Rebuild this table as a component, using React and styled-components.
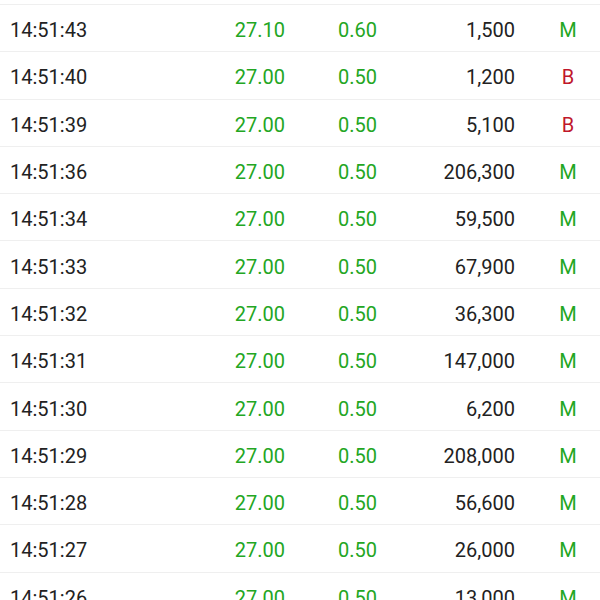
import React from "react";
import styled, { createGlobalStyle } from "styled-components";

const Global = createGlobalStyle`
  html, body { margin: 0; padding: 0; background: #ffffff; }
  body { font-family: Roboto, "Noto Sans", sans-serif; overflow: hidden; }
`;

const Page = styled.div`
  width: 600px;
  height: 600px;
  overflow: hidden;
  padding-top: 4px;
  box-sizing: border-box;
  background: #fff;
`;

const List = styled.div`
  border-top: 1px solid #efefef;
`;

const Row = styled.div`
  display: grid;
  grid-template-columns: 175px 100px 92px 138px 85px;
  align-items: center;
  height: 47.3px;
  box-sizing: border-box;
  padding: 4px 0 0 10px;
  border-bottom: 1px solid #efefef;
  font-size: 20px;
  color: #222222;
`;

const Time = styled.span`
  text-align: left;
`;

const Num = styled.span`
  text-align: right;
  color: ${(p) => (p.$green ? "#23a623" : "#222222")};
`;

const Flag = styled.span`
  padding-left: 21px;
  text-align: center;
  color: ${(p) => (p.$type === "B" ? "#c0172b" : "#23a623")};
`;

const rows = [
  ["14:51:43", "27.10", "0.60", "1,500", "M"],
  ["14:51:40", "27.00", "0.50", "1,200", "B"],
  ["14:51:39", "27.00", "0.50", "5,100", "B"],
  ["14:51:36", "27.00", "0.50", "206,300", "M"],
  ["14:51:34", "27.00", "0.50", "59,500", "M"],
  ["14:51:33", "27.00", "0.50", "67,900", "M"],
  ["14:51:32", "27.00", "0.50", "36,300", "M"],
  ["14:51:31", "27.00", "0.50", "147,000", "M"],
  ["14:51:30", "27.00", "0.50", "6,200", "M"],
  ["14:51:29", "27.00", "0.50", "208,000", "M"],
  ["14:51:28", "27.00", "0.50", "56,600", "M"],
  ["14:51:27", "27.00", "0.50", "26,000", "M"],
  ["14:51:26", "27.00", "0.50", "13,000", "M"],
];

export default function App() {
  return (
    <>
      <Global />
      <Page>
        <List>
          {rows.map(([t, p, c, v, f]) => (
            <Row key={t}>
              <Time>{t}</Time>
              <Num $green>{p}</Num>
              <Num $green>{c}</Num>
              <Num>{v}</Num>
              <Flag $type={f}>{f}</Flag>
            </Row>
          ))}
        </List>
      </Page>
    </>
  );
}
